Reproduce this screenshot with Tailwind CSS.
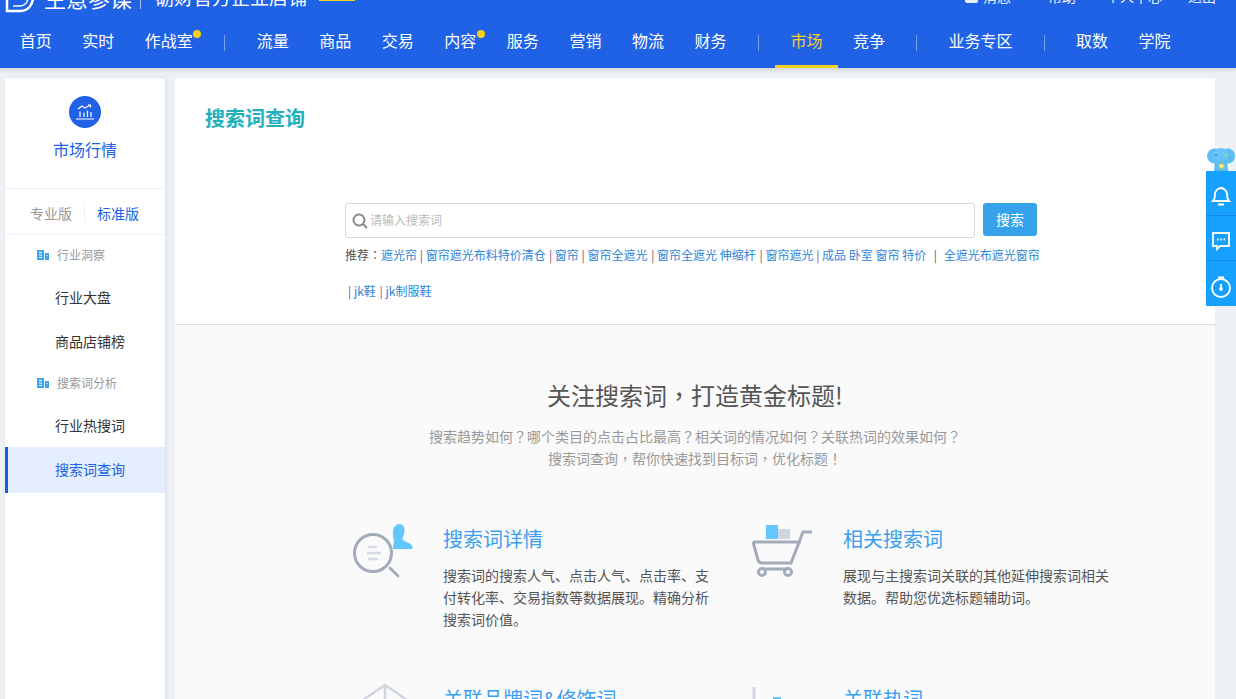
<!DOCTYPE html>
<html lang="zh">
<head>
<meta charset="utf-8">
<title>搜索词查询</title>
<script src="https://cdn.jsdelivr.net/npm/@tailwindcss/browser@4"></script>
</head>
<body class="bg-[#edf0f5]">
<div class="relative h-[699px] w-[1236px] overflow-hidden bg-[#edf0f5] font-['Noto_Sans_CJK_SC','Noto_Sans',sans-serif] text-[#333]">

    <!-- header -->
    <header class="h-[68px] overflow-hidden bg-[#2062e6] text-white shadow-[0_2px_4px_rgba(0,0,0,0.12)] relative z-10">
        <div class="-mt-[23px] flex h-[39px] items-center pl-[5px] pr-[20px]">
            <svg class="h-[32px] w-[30px]" viewBox="0 0 30 32" fill="none" stroke="#fff" stroke-width="2.5"><path d="M2 2h13c8 0 13 6 13 14s-5 14-13 14H2z"/><path d="M8 25h7c5 0 8-4 8-9" stroke-width="1.5"/></svg>
            <span class="ml-[9px] text-[22px] leading-none">生意参谋</span>
            <span class="ml-[8px] h-[24px] w-px bg-white/60"></span>
            <span class="ml-[14px] text-[19px] leading-none">砺财官方企业店铺</span>
            <span class="ml-[12px] h-[26px] w-[36px] -translate-y-[9px] bg-[#f5d01f]"></span>
            <div class="ml-auto flex items-center text-[14px] text-white/90">
                <span class="mr-[5px] h-[12px] w-[13px] rounded-[2px] bg-white/90"></span>
                <span>消息</span>
                <span class="ml-[37px]">帮助</span>
                <span class="ml-[30px]">个人中心</span>
                <span class="ml-[26px]">退出</span>
            </div>
        </div>
        <nav class="flex h-[52px] items-stretch pl-[4.5px] text-[16px]">
            <a class="flex items-center border-b-[3px] border-transparent px-[15.25px] pb-[2px]">首页</a>
            <a class="flex items-center border-b-[3px] border-transparent px-[15.25px] pb-[2px]">实时</a>
            <a class="relative flex items-center border-b-[3px] border-transparent px-[15.25px] pb-[2px]">作战室<span class="absolute right-[7px] top-[14px] h-[8px] w-[8px] rounded-full bg-[#f5d01f]"></span></a>
            <span class="mx-[16.25px] mt-[19px] h-[16px] w-px bg-white/40"></span>
            <a class="flex items-center border-b-[3px] border-transparent px-[15.25px] pb-[2px]">流量</a>
            <a class="flex items-center border-b-[3px] border-transparent px-[15.25px] pb-[2px]">商品</a>
            <a class="flex items-center border-b-[3px] border-transparent px-[15.25px] pb-[2px]">交易</a>
            <a class="relative flex items-center border-b-[3px] border-transparent px-[15.25px] pb-[2px]">内容<span class="absolute right-[7px] top-[14px] h-[8px] w-[8px] rounded-full bg-[#f5d01f]"></span></a>
            <a class="flex items-center border-b-[3px] border-transparent px-[15.25px] pb-[2px]">服务</a>
            <a class="flex items-center border-b-[3px] border-transparent px-[15.25px] pb-[2px]">营销</a>
            <a class="flex items-center border-b-[3px] border-transparent px-[15.25px] pb-[2px]">物流</a>
            <a class="flex items-center border-b-[3px] border-transparent px-[15.25px] pb-[2px]">财务</a>
            <span class="mx-[16.25px] mt-[19px] h-[16px] w-px bg-white/40"></span>
            <a class="flex items-center border-b-[3px] border-[#f5d01f] px-[15.25px] pb-[2px] text-[#f5d01f]">市场</a>
            <a class="flex items-center border-b-[3px] border-transparent px-[15.25px] pb-[2px]">竞争</a>
            <span class="mx-4 mt-[19px] h-[16px] w-px bg-white/40"></span>
            <a class="flex items-center border-b-[3px] border-transparent px-[15.25px] pb-[2px]">业务专区</a>
            <span class="mx-4 mt-[19px] h-[16px] w-px bg-white/40"></span>
            <a class="flex items-center border-b-[3px] border-transparent px-[15.25px] pb-[2px]">取数</a>
            <a class="flex items-center border-b-[3px] border-transparent px-[15.25px] pb-[2px]">学院</a>
        </nav>
    </header>

    <div class="flex items-start pl-[5px] pt-[10px]">

        <!-- sidebar -->
        <aside class="h-[640px] w-[160px] shrink-0 bg-white shadow-[1px_0_3px_rgba(0,0,0,0.08)]">
            <div class="flex h-[111px] flex-col items-center border-b border-[#eef0f4] pt-[18px]">
                <span class="flex h-[32px] w-[32px] items-center justify-center rounded-full bg-[#2062e6]">
                    <svg class="h-[20px] w-[20px]" viewBox="0 0 20 20" fill="none" stroke="#fff" stroke-width="1.2"><path d="M3 7l4-3 3 2 5-3M13 3h2.500v2.500"/><path d="M1 17h18M5 9.500V15M9 10.500V15M12.500 8.500V15M16 10V15"/></svg>
                </span>
                <span class="mt-[11px] text-[16px] leading-[20px] text-[#2062e6]">市场行情</span>
            </div>
            <div class="flex h-[46px] items-center border-b border-[#eef0f4] pl-[25px] pt-[3px] text-[14px]">
                <span class="w-[42px] text-[#999]">专业版</span>
                <span class="mx-[12px] h-[20px] w-px bg-[#eef0f4]"></span>
                <span class="text-[#2062e6]">标准版</span>
            </div>
            <div class="flex h-[40px] items-center pl-[32px] text-[12px] text-[#999]">
                <svg class="mr-[8px] h-[12px] w-[12px]" viewBox="0 0 12 12" fill="#3ba4f5"><path d="M0 1h7v10H0zM8 4h4v7H8z"/><path d="M2 3h3v1H2zM2 5.500h3v1H2zM2 8h3v1H2zM9.500 6h1v1h-1z" fill="#fff"/></svg>
                行业洞察
            </div>
            <div class="flex h-[44px] items-center pl-[50px] text-[14px]">行业大盘</div>
            <div class="flex h-[44px] items-center pl-[50px] text-[14px]">商品店铺榜</div>
            <div class="flex h-[40px] items-center pl-[32px] text-[12px] text-[#999]">
                <svg class="mr-[8px] h-[12px] w-[12px]" viewBox="0 0 12 12" fill="#3ba4f5"><path d="M0 1h7v10H0zM8 4h4v7H8z"/><path d="M2 3h3v1H2zM2 5.500h3v1H2zM2 8h3v1H2zM9.500 6h1v1h-1z" fill="#fff"/></svg>
                搜索词分析
            </div>
            <div class="flex h-[44px] items-center pl-[50px] text-[14px]">行业热搜词</div>
            <div class="flex h-[46px] items-center border-l-[3px] border-[#0f5fe0] bg-[#e4eefe] pb-[2px] pl-[47px] text-[14px] text-[#2062e6]">搜索词查询</div>
        </aside>

        <!-- main -->
        <main class="ml-[10px] h-[640px] w-[1040px] shrink-0 overflow-hidden bg-[#fafafa]">
            <section class="h-[247px] border-b border-[#dcdcdc] bg-white">
                <h1 class="pl-[30px] pt-[26px] text-[20px] font-bold leading-[28px] text-[#1fb0bb]">搜索词查询</h1>
                <div class="ml-[170px] mt-[71px] w-[700px]">
                    <div class="flex items-start">
                        <div class="flex h-[35px] w-[630px] items-center rounded-[3px] border border-[#d8d8d8] pb-[2px] pl-[6px] text-[12px] text-[#bbb]">
                            <svg class="mr-[2px] mt-[2px] h-[16px] w-[16px]" viewBox="0 0 16 16" fill="none" stroke="#888" stroke-width="2"><circle cx="7" cy="7" r="5.500"/><path d="M11 11l4 4"/></svg>
                            请输入搜索词
                        </div>
                        <button class="ml-[8px] h-[33px] w-[54px] rounded-[3px] bg-[#35a2ea] text-[14px] text-white">搜索</button>
                    </div>
                    <p class="mt-[8px] whitespace-nowrap text-[12px] leading-[18px] text-[#2d86d8]"><span class="text-[#555]">推荐<span lang="zh-TW" class="font-['Noto_Sans_CJK_TC']">：</span></span>遮光帘 <span class="text-[#8a4a7a]">|</span> 窗帘遮光布料特价清仓 <span class="ml-[.5px] text-[#8a4a7a]">|</span> 窗帘 <span class="text-[#8a4a7a]">|</span> 窗帘全遮光 <span class="ml-[1px] text-[#8a4a7a]">|</span> 窗帘全遮光 伸缩杆 <span class="ml-[1px] text-[#8a4a7a]">|</span> 窗帘遮光 <span class="text-[#8a4a7a]">|</span> 成品 卧室 窗帘 特价 <span class="ml-[5px] text-[#8a4a7a]">|</span>&nbsp;<span class="ml-[4px]">全遮光布遮光窗帘</span></p>
                    <p class="mt-[18px] pl-[3px] text-[12px] leading-[18px] text-[#2d86d8]"><span class="text-[#8a4a7a]">|</span> jk鞋 <span class="ml-[1px] text-[#8a4a7a]">|</span> jk制服鞋</p>
                </div>
            </section>

            <section class="pt-[53px]">
                <h2 class="text-center text-[24px] leading-[34px] text-[#555]">关注搜索词<span lang="zh-TW" class="font-['Noto_Sans_CJK_TC']">，</span>打造黄金标题!</h2>
                <p class="mt-[13px] text-center text-[14px] leading-[22px] text-[#999]">搜索趋势如何<span lang="zh-TW" class="font-['Noto_Sans_CJK_TC']">？</span>哪个类目的点击占比最高<span lang="zh-TW" class="font-['Noto_Sans_CJK_TC']">？</span>相关词的情况如何<span lang="zh-TW" class="font-['Noto_Sans_CJK_TC']">？</span>关联热词的效果如何<span lang="zh-TW" class="font-['Noto_Sans_CJK_TC']">？</span><br>搜索词查询<span lang="zh-TW" class="font-['Noto_Sans_CJK_TC']">，</span>帮你快速找到目标词<span lang="zh-TW" class="font-['Noto_Sans_CJK_TC']">，</span>优化标题<span lang="zh-TW" class="font-['Noto_Sans_CJK_TC']">！</span></p>
                <div class="ml-[170px] mt-[55px] grid w-[800px] grid-cols-2 gap-y-[24px]">
                    <div class="flex h-[136px]">
                        <svg class="h-[60px] w-[98px] shrink-0" viewBox="0 0 98 60" fill="none">
                            <circle cx="28" cy="29" r="18.500" stroke="#a3abbb" stroke-width="3"/>
                            <path d="M45 44l8 8" stroke="#a3abbb" stroke-width="3" stroke-linecap="round"/>
                            <path d="M23 23h9M22 29h14M23 35h10" stroke="#d7dce6" stroke-width="2.500"/>
                            <path d="M54 0c4 0 6 3 5.500 8-.5 3-2 5-2 7 0 2 5 3 8 5 1.500 1 2 3 2 5H48c0-3 .5-5 1-7 .5-2-1-4-1-7-.5-6 2-11 6-11z" fill="#62c6ff"/>
                        </svg>
                        <div class="w-[270px]">
                            <h3 class="mt-px text-[20px] leading-[28px] text-[#3a9ff0]">搜索词详情</h3>
                            <p class="mt-[11px] text-[14px] leading-[22px] text-[#555]">搜索词的搜索人气、点击人气、点击率、支付转化率、交易指数等数据展现。精确分析搜索词价值。</p>
                        </div>
                    </div>
                    <div class="flex h-[136px] pl-[7px]">
                        <svg class="h-[60px] w-[91px] shrink-0" viewBox="0 0 91 60" fill="none">
                            <path d="M14 1h12v14H14z" fill="#62c6ff"/><path d="M26 5h12v10H26z" fill="#d0d6e1"/>
                            <path d="M1 18h48M60 8h-9L39 39H10q-3 0-4-3L1 18M12 45h22" stroke="#a3abbb" stroke-width="3"/>
                            <circle cx="10" cy="48" r="3.500" stroke="#a3abbb" stroke-width="3"/><circle cx="36" cy="48" r="3.500" stroke="#a3abbb" stroke-width="3"/>
                        </svg>
                        <div class="w-[270px]">
                            <h3 class="mt-px text-[20px] leading-[28px] text-[#3a9ff0]">相关搜索词</h3>
                            <p class="mt-[11px] text-[14px] leading-[22px] text-[#555]">展现与主搜索词关联的其他延伸搜索词相关数据。帮助您优选标题辅助词。</p>
                        </div>
                    </div>
                    <div class="flex">
                        <svg class="h-[60px] w-[98px] shrink-0" viewBox="0 0 98 60" fill="none"><path d="M15 18L40 1l25 17M40 1v40" stroke="#d0d6e1" stroke-width="2.500"/></svg>
                        <h3 class="mt-px text-[20px] leading-[28px] text-[#3a9ff0]">关联品牌词&amp;修饰词</h3>
                    </div>
                    <div class="flex pl-[7px]">
                        <svg class="h-[60px] w-[91px] shrink-0" viewBox="0 0 91 60" fill="none"><path d="M2 3v40" stroke="#d0d6e1" stroke-width="3"/><path d="M21 13h8v30h-8z" fill="#62c6ff"/></svg>
                        <h3 class="mt-px text-[20px] leading-[28px] text-[#3a9ff0]">关联热词</h3>
                    </div>
                </div>
            </section>
        </main>
    </div>

    <!-- floating tools -->
    <div class="absolute right-0 top-[147px] z-20 w-[30px]">
        <svg class="block h-[24px] w-[30px]" viewBox="0 0 30 24">
            <ellipse cx="8.500" cy="9" rx="7.500" ry="7.500" fill="#5cbdf5"/>
            <ellipse cx="22" cy="9" rx="7" ry="7.500" fill="#5cbdf5"/>
            <ellipse cx="15" cy="8" rx="8" ry="7" fill="#68c4f8"/>
            <path d="M9 14h12l1 10H8z" fill="#5cbdf5"/>
            <circle cx="15.500" cy="19" r="2.800" fill="#e8d23a"/><circle cx="15.500" cy="19" r="1.200" fill="#fff"/>
            <circle cx="10" cy="8" r="1" fill="#2d86d8"/><circle cx="20" cy="8" r="1" fill="#e8d23a"/>
        </svg>
        <div class="bg-[#16a0ff]">
            <div class="flex h-[45px] items-center justify-center border-b border-[#0f8ae0] pt-[6px]">
                <svg class="h-[22px] w-[22px]" viewBox="0 0 22 22" fill="none" stroke="#fff" stroke-width="1.800"><path d="M3 16c2-2 2-4 2-7 0-3 3-6 6-6s6 3 6 6c0 3 0 5 2 7z"/><path d="M8 19.500h6" stroke-width="2"/></svg>
            </div>
            <div class="flex h-[45px] items-center justify-center border-b border-[#0f8ae0] pt-[6px]">
                <svg class="h-[22px] w-[22px]" viewBox="0 0 22 22" fill="none" stroke="#fff" stroke-width="1.800"><path d="M3 3h16v13H10l-3 3v-3H3z"/><path d="M7 9.500h1.500M10.300 9.500h1.500M13.600 9.500h1.500" stroke-width="2"/></svg>
            </div>
            <div class="flex h-[45px] items-center justify-center pt-[6px]">
                <svg class="h-[22px] w-[22px]" viewBox="0 0 22 22" fill="none" stroke="#fff" stroke-width="1.800"><circle cx="11" cy="12" r="9"/><path d="M8 1.500h6M11 8v4" /><circle cx="11" cy="13" r="1" fill="#fff"/></svg>
            </div>
        </div>
    </div>
</div>
</body>
</html>
